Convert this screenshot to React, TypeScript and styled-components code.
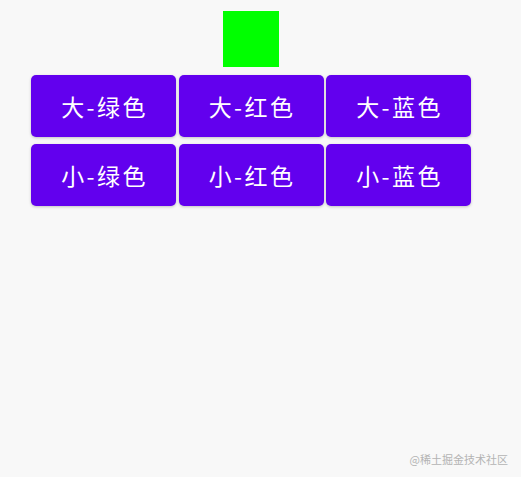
import React from "react";
import styled, { createGlobalStyle } from "styled-components";

const GlobalStyle = createGlobalStyle`
  html, body {
    margin: 0;
    padding: 0;
    background: #f8f8f8;
    font-family: "Noto Sans CJK SC", "Noto Sans", sans-serif;
  }
`;

const Screen = styled.div`
  position: relative;
  width: 521px;
  height: 477px;
  overflow: hidden;
  background: #f8f8f8;
`;

const Content = styled.div`
  width: 440px;
  padding: 11px 0 0 31px;
  display: flex;
  flex-direction: column;
  align-items: center;
`;

const Square = styled.div<{ $color: string }>`
  width: 56px;
  height: 56px;
  background: ${(p) => p.$color};
`;

const ButtonGrid = styled.div`
  margin-top: 8px;
  display: grid;
  grid-template-columns: repeat(3, 145px);
  grid-auto-rows: 62px;
  column-gap: 2.5px;
  row-gap: 7px;
`;

const Button = styled.button`
  border: none;
  border-radius: 5px;
  background: #6200ee;
  color: #fff;
  font-family: "Noto Sans CJK SC", "Noto Sans", sans-serif;
  font-size: 23px;
  font-weight: 400;
  letter-spacing: 2.4px;
  padding: 0 0 0 2px;
  box-shadow: 0 1px 3px rgba(0, 0, 0, 0.22);
  cursor: pointer;
`;

const Watermark = styled.div`
  position: absolute;
  right: 13px;
  bottom: 10px;
  font-size: 11px;
  color: #b4b4b4;
  font-family: "Noto Sans CJK SC", sans-serif;
`;

const labels = [
  "大-绿色",
  "大-红色",
  "大-蓝色",
  "小-绿色",
  "小-红色",
  "小-蓝色",
];

export default function App() {
  return (
    <Screen>
      <GlobalStyle />
      <Content>
        <Square $color="#00ff00" />
        <ButtonGrid>
          {labels.map((l) => (
            <Button key={l}>{l}</Button>
          ))}
        </ButtonGrid>
      </Content>
      <Watermark>@稀土掘金技术社区</Watermark>
    </Screen>
  );
}
